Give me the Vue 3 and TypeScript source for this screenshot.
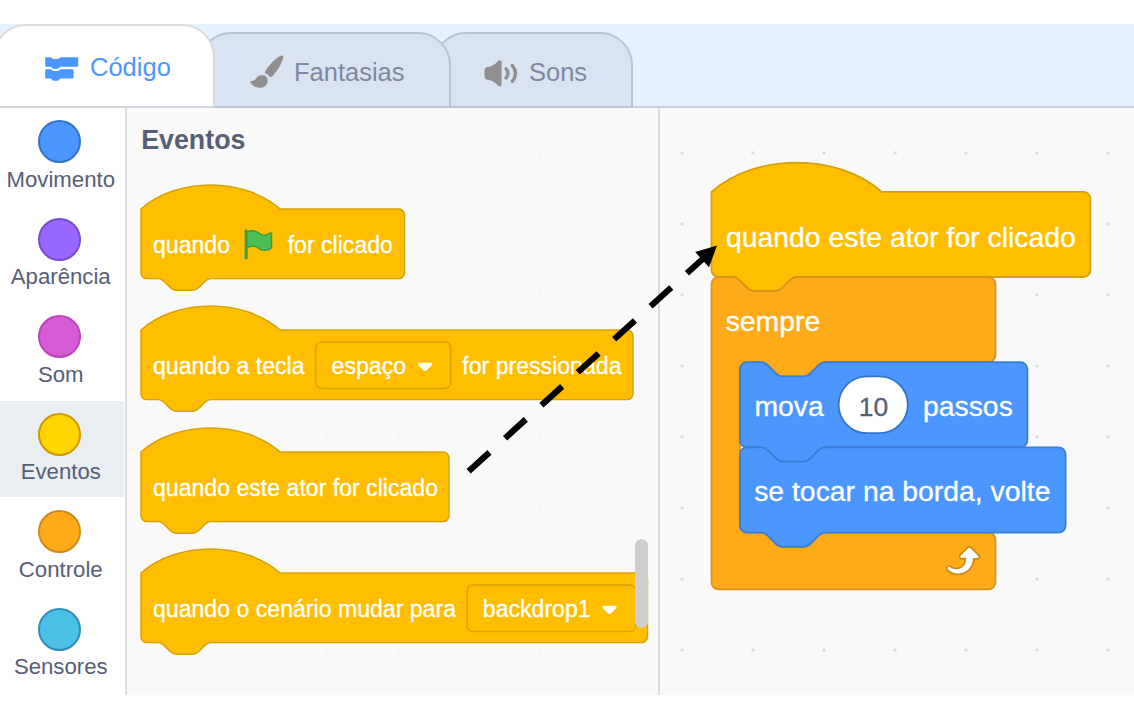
<script setup lang="ts">
interface Category {
  name: string
  key: string
  active?: boolean
}

interface Label {
  x: number
  text: string
}

interface HatBlock {
  width: number
  labels: Label[]
  flag?: boolean
  field?: { x: number; width: number; text: string; textX: number; arrowX: number }
}

const categories: Category[] = [
  { name: 'Movimento', key: 'motion' },
  { name: 'Aparência', key: 'looks' },
  { name: 'Som', key: 'sound' },
  { name: 'Eventos', key: 'events', active: true },
  { name: 'Controle', key: 'control' },
  { name: 'Sensores', key: 'sensing' },
]

const PALETTE_SCALE = 1.45

const blocks: HatBlock[] = [
  { width: 263.5, flag: true, labels: [{ x: 12, text: 'quando' }, { x: 146.7, text: 'for clicado' }] },
  {
    width: 492,
    labels: [{ x: 12, text: 'quando a tecla' }, { x: 321.3, text: 'for pressionada' }],
    field: { x: 174.7, width: 135, text: 'espaço', textX: 190.6, arrowX: 276.6 },
  },
  { width: 308, labels: [{ x: 12, text: 'quando este ator for clicado' }] },
  {
    width: 506.5,
    labels: [{ x: 12, text: 'quando o cenário mudar para' }],
    field: { x: 326.2, width: 168.5, text: 'backdrop1', textX: 341.8, arrowX: 461 },
  },
]

// Connector shapes shared by every stackable block, in block units.
const tab = 'c-2 0-3 1-4 2l-4 4c-1 1-2 2-4 2h-12c-2 0-3-1-4-2l-4-4c-1-1-2-2-4-2'
const notch = 'c2 0 3 1 4 2l4 4c1 1 2 2 4 2h12c2 0 3-1 4-2l4-4c1-1 2-2 4-2'

const hatPath = (w: number): string =>
  `M0 0c25-22 71-22 96 0H${w - 4}a4 4 0 0 1 4 4v40a4 4 0 0 1-4 4H48${tab}H4a4 4 0 0 1-4-4z`

const stackPath = (w: number): string =>
  `M0 4a4 4 0 0 1 4-4h8${notch}H${w - 4}a4 4 0 0 1 4 4v40a4 4 0 0 1-4 4H48${tab}H4a4 4 0 0 1-4-4z`

const loopPath =
  `M0 4a4 4 0 0 1 4-4h8${notch}H156a4 4 0 0 1 4 4v40a4 4 0 0 1-4 4H64${tab}h-8a4 4 0 0 0-4 4` +
  `v88a4 4 0 0 0 4 4h8${notch}H156a4 4 0 0 1 4 4v24a4 4 0 0 1-4 4H4a4 4 0 0 1-4-4z`
</script>

<template>
  <div class="page">
    <header class="tabs">
      <div class="tab tab-code">
        <svg class="icon" width="34" height="24" viewBox="0 0 34 24">
          <path
            d="M1.4.3h3.800c1.400 0 1.800 1.600 3.100 1.600h4.600c1.300 0 1.700-1.600 3.100-1.600h15.900c.8 0 1.300.5 1.300 1.300v6.900c0 .8-.5 1.300-1.300 1.300H16c-1.400 0-1.700 1.900-3.100 1.900H8.300C7 11.700 6.600 9.800 5.200 9.800H1.400C.6 9.800.2 9.300.2 8.500V1.600C.2.8.6.3 1.400.3z"
          />
          <path
            d="M1.400 12.300h3.800c1.400 0 1.800 1.600 3.100 1.600h4.600c1.300 0 1.700-1.600 3.100-1.600h11.300c.8 0 1.300.5 1.300 1.300v6.600c0 .8-.5 1.300-1.300 1.300H16c-1.400 0-1.700 2.200-3.100 2.200H8.300c-1.300 0-1.700-2.200-3.100-2.200H1.400c-.8 0-1.200-.5-1.200-1.300v-6.600c0-.8.4-1.300 1.200-1.300z"
          />
        </svg>
        <span>Código</span>
      </div>
      <div class="tab tab-costumes">
        <svg class="icon" width="34" height="34" viewBox="0 0 34 34">
          <path
            d="M31.300.5c1.400-.4 2.400.6 2 2.100-1 4-3.100 8.500-6.300 13-1.700 2.400-3.600 4.600-5.500 6.200-.6.5-1.200.4-1.700-.1-1-1.400-2.500-2.500-4.200-3.200-.7-.3-.9-.9-.6-1.600 1.200-2.400 3.200-5.200 5.800-8.100C24.400 5 28.200 1.700 31.300.5z"
          />
          <path
            d="M13 20.300c2.900.4 4.800 2.500 4.700 5.400-.1 4.300-3.600 7-8 7-4 0-7.500-2.100-9.200-5.300-.4-.8 0-1.500.9-1.500 2.300.1 3.400-.6 4.700-2.500 1.600-2.300 3.900-3.500 6.900-3.100z"
          />
        </svg>
        <span>Fantasias</span>
      </div>
      <div class="tab tab-sounds">
        <svg class="icon" width="34" height="27" viewBox="0 0 34 27">
          <path
            d="M4.500 6.700c3.500-.4 6.500-2.300 9.300-5.500C15.400-.5 17.600.2 17.600 2.500v21.700c0 2.300-2.200 2.900-3.800 1.200-2.800-3.200-5.800-5-9.300-5.400C1.600 19.600.5 18.300.5 16v-5.200c0-2.300 1.100-3.800 4-4.100z"
          />
          <path class="wave" d="M22.100 8.700q3.700 4.700 0 9.300M28.300 5.500q6.500 7.900 0 15.800" />
        </svg>
        <span>Sons</span>
      </div>
    </header>

    <main class="editor">
      <nav class="categories">
        <div v-for="c in categories" :key="c.key" class="category" :class="{ active: c.active }">
          <i class="bubble" :class="c.key"></i>
          <span>{{ c.name }}</span>
        </div>
      </nav>

      <section class="palette">
        <h2>Eventos</h2>
        <svg
          v-for="(b, i) in blocks"
          :key="i"
          class="hat"
          :width="b.width"
          height="70"
          :viewBox="`0 0 ${b.width} 70`"
        >
          <path
            class="block events-block"
            :d="hatPath(b.width / PALETTE_SCALE)"
            :transform="`scale(${PALETTE_SCALE})`"
          />
          <text v-for="l in b.labels" :key="l.text" :x="l.x" y="44.300">{{ l.text }}</text>
          <g v-if="b.flag" transform="translate(100 18) scale(1.45)">
            <path
              fill="#45993d"
              d="M20.800 3.700c-.4-.2-.9-.1-1.200.2-2 1.600-4.800 1.600-6.800 0-2.300-1.900-5.600-2.300-8.300-1v-.4c0-.6-.5-1-1-1s-1 .4-1 1v18.800c0 .5.5 1 1 1h.1c.5 0 1-.5 1-1v-6.400c1-.7 2.100-1.200 3.400-1.300 1.200 0 2.400.4 3.400 1.200 2.900 2.300 7 2.300 9.800 0 .3-.2.4-.5.4-.9V4.700c0-.5-.3-.9-.8-1z"
            />
            <path
              fill="#4cbf56"
              d="M20.600 4.800l-.1 9.100v.1c-2.500 2-6.100 2-8.600 0-1.100-.9-2.500-1.400-4-1.400-1.200.1-2.300.5-3.400 1.100V4c2.500-1.400 5.500-1.100 7.700.6 2.400 1.900 5.700 1.900 8.100 0h.2c0 .1.100.1.100.2z"
            />
          </g>
          <g v-if="b.field">
            <rect class="field" :x="b.field.x" y="11.900" :width="b.field.width" height="46.600" rx="5.800" />
            <text :x="b.field.textX" y="44.300">{{ b.field.text }}</text>
            <path
              class="caret"
              :transform="`translate(${b.field.arrowX} 32.500)`"
              d="M2.200 0.300h10.600c1.700 0 2.300 1.500 1.200 2.600L8.800 8c-.8.7-1.800.7-2.600 0L1 2.900C-.1 1.800.5.300 2.200.3z"
            />
          </g>
        </svg>
        <div class="scrollbar"></div>
      </section>

      <section class="workspace">
        <svg width="474" height="587" viewBox="660 108 474 587">
          <g transform="translate(711.500 191.800) scale(1.775)">
            <path class="block events-block" :d="hatPath(213.500)" />
            <path class="block control-block" transform="translate(0 48)" :d="loopPath" />
            <path class="block motion-block" transform="translate(16 96)" :d="stackPath(162)" />
            <path class="block motion-block" transform="translate(16 144)" :d="stackPath(183.500)" />
            <rect class="number" x="71.600" y="104" width="39" height="32" rx="16" />
            <g transform="translate(128.100 195.300)">
              <path
                fill="#cf8b17"
                d="M23.300 11c-.3.6-.9 1-1.500 1h-1.600c-.1 1.300-.5 2.500-1.100 3.600-.9 1.700-2.300 3.200-4.100 4.100-1.700.9-3.600 1.200-5.500.9-1.800-.3-3.500-1.100-4.900-2.300-.7-.7-.7-1.900 0-2.600.6-.6 1.600-.7 2.300-.2H7c.9.6 1.900.9 2.900.9s1.900-.3 2.700-.9c1.100-.8 1.800-2.100 1.800-3.500h-1.500c-.9 0-1.700-.7-1.700-1.700 0-.4.2-.9.5-1.200l4.400-4.400c.7-.6 1.700-.6 2.400 0L23 9.200c.5.5.6 1.200.3 1.800z"
              />
              <path
                fill="#fff"
                d="M21.800 11h-2.600c0 1.500-.3 2.900-1 4.200-.8 1.600-2.100 2.800-3.700 3.600-1.500.8-3.300 1.100-4.900.8-1.600-.2-3.200-1-4.400-2.100-.4-.3-.4-.9-.1-1.200.3-.4.9-.4 1.200-.1 1 .7 2.200 1.100 3.400 1.100s2.300-.3 3.300-1c.9-.6 1.600-1.500 2-2.600.3-.9.4-1.800.2-2.800h-2.400c-.4 0-.7-.3-.7-.7 0-.2.1-.3.2-.4l4.400-4.400c.3-.3.700-.3.900 0L22 9.800c.3.3.4.6.3.9s-.3.3-.5.3z"
              />
            </g>
          </g>
          <text x="726" y="246.600">quando este ator for clicado</text>
          <text x="725.700" y="330.600">sempre</text>
          <text x="754.400" y="415.800">mova</text>
          <text class="value" x="873.500" y="415.800">10</text>
          <text x="923" y="415.800">passos</text>
          <text x="754.200" y="501.400">se tocar na borda, volte</text>
        </svg>
      </section>
    </main>

    <svg class="drag-arrow" width="270" height="250" viewBox="460 235 270 250">
      <path class="shaft" d="M468.700 471.200L704 257.800" />
      <path d="M717 245.500L695.200 252L709 267.300z" />
    </svg>
  </div>
</template>

<style>
body {
  background: #fff;
}
</style>

<style scoped>
.page {
  position: relative;
  box-sizing: border-box;
  width: 1134px;
  height: 720px;
  padding-top: 24px;
  overflow: hidden;
  background: #fff;
  font-family: 'Liberation Sans', Arial, sans-serif;
}

.tabs {
  display: flex;
  align-items: flex-end;
  box-sizing: border-box;
  height: 84px;
  background: #e6f0ff;
  box-shadow: inset 0 -2px #c2cfe2;
}

.tab {
  position: relative;
  display: flex;
  align-items: center;
  box-sizing: border-box;
  height: 76px;
  border: 2px solid #b9c5d6;
  border-radius: 33px 33px 0 0;
  background: #d9e3f2;
  color: #7f88a0;
  font-size: 25.500px;
  line-height: 30px;
}

.icon {
  flex: none;
  fill: #8f8f8f;
}

.tab-code {
  z-index: 3;
  width: 222px;
  height: 84px;
  margin-left: -7px;
  padding: 0 0 0 50px;
  gap: 11px;
  border-color: #dcdcdc #d9d9d9 #d0d6dd;
  background: #fff;
  color: #4c97ff;
}

.tab-code .icon {
  fill: #4c97ff;
  margin-top: 6px;
}

.tab-code span {
  margin-top: 1px;
}

.tab-costumes {
  z-index: 2;
  width: 253px;
  margin-left: -17px;
  padding: 2px 0 0 50px;
  gap: 10px;
}

.tab-costumes .icon {
  margin-top: 1px;
}

.tab-costumes span {
  margin-top: 1px;
}

.tab-sounds {
  width: 200px;
  margin-left: -18px;
  padding: 5px 0 0 49px;
  gap: 11px;
}

.tab-sounds .icon {
  margin-top: 2px;
}

.tab-sounds span {
  margin-top: -2px;
}

.wave {
  fill: none;
  stroke: #8f8f8f;
  stroke-width: 3.400;
  stroke-linecap: round;
}

.editor {
  display: flex;
  height: 587px;
}

.categories {
  box-sizing: border-box;
  width: 126.500px;
  height: 587px;
  border-right: 2px solid #dcdcdc;
  overflow: hidden;
}

.category {
  display: flex;
  flex-direction: column;
  align-items: center;
  box-sizing: border-box;
  width: 123.500px;
  height: 97.600px;
  padding: 12px 5px 0 0;
  border-bottom: 1px solid transparent;
  background-clip: padding-box;
  color: #575e75;
  font-size: 22.200px;
  line-height: 26px;
}

.category span {
  margin: 3.500px -3px 0 0;
}

.category.active {
  background-color: #e9eef2;
}

.bubble {
  box-sizing: border-box;
  width: 43px;
  height: 43px;
  flex: none;
  border: 2px solid;
  border-radius: 50%;
}

.motion { background: #4c97ff; border-color: #3373cc; }
.looks { background: #9966ff; border-color: #774dcb; }
.sound { background: #d65cd6; border-color: #bd42bd; }
.events { background: #ffd500; border-color: #cc9900; }
.control { background: #ffab19; border-color: #cf8b17; }
.sensing { background: #4cbfe6; border-color: #2e8eb8; }

.palette {
  position: relative;
  display: flex;
  flex-direction: column;
  align-items: flex-start;
  gap: 51.300px;
  box-sizing: border-box;
  width: 533.500px;
  padding: 17px 0 0 14.700px;
  border-right: 2px solid #dcdcdc;
  background: radial-gradient(circle, #f3f3f3 1.300px, transparent 2px) 22.500px 9.500px / 71px 71px #f9f9f9;
}

.palette h2 {
  margin: 0 0 -18.300px;
  height: 51px;
  color: #575e75;
  font-size: 26.800px;
  line-height: 30px;
  font-weight: 700;
}

.hat {
  flex: none;
  overflow: visible;
}

text {
  fill: #fff;
  stroke: #fff;
  stroke-width: 0.300;
  font-size: 23.100px;
}

.block {
  stroke-width: 1;
}

.events-block { fill: #ffbf00; stroke: #d6a106; }
.control-block { fill: #ffab19; stroke: #d89320; }
.motion-block { fill: #4c97ff; stroke: #3b7ed6; }

.field {
  fill: none;
  stroke: #d9a300;
  stroke-width: 1.450;
}

.caret {
  fill: #fff;
}

.scrollbar {
  position: absolute;
  top: 431px;
  right: 10.500px;
  width: 13px;
  height: 88.500px;
  border-radius: 6.500px;
  background: #cecece;
}

.workspace {
  flex: 1;
  min-width: 0;
  background: radial-gradient(circle, #d9d9d9 1.200px, transparent 2px) -13.500px 9.500px / 71px 71px #f9f9f9;
}

.workspace svg {
  display: block;
}

.workspace text {
  font-size: 28.350px;
}

.number {
  fill: #fff;
  stroke: #3373cc;
  stroke-width: 1;
}

.workspace .value {
  fill: #575e75;
  stroke: #575e75;
  font-size: 26.500px;
  text-anchor: middle;
}

.drag-arrow {
  position: absolute;
  z-index: 5;
  left: 460px;
  top: 235px;
}

.shaft {
  fill: none;
  stroke: #000;
  stroke-width: 6.200;
  stroke-dasharray: 28 21.100;
}
</style>
